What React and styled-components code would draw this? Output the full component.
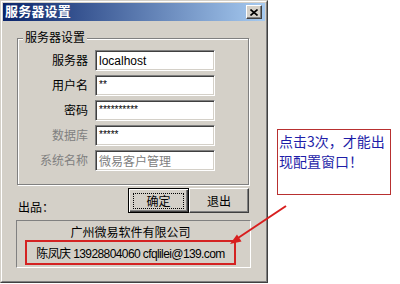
import styled, { createGlobalStyle } from "styled-components";

const GlobalStyle = createGlobalStyle`
  html, body {
    margin: 0;
    padding: 0;
    background: #ffffff;
  }
  body {
    font-family: "Liberation Sans", "Noto Sans CJK SC", sans-serif;
    font-size: 12px;
    color: #000000;
  }
`;

const Page = styled.div`
  position: relative;
  display: flex;
  width: 400px;
  height: 284px;
  overflow: hidden;
`;

const Window = styled.div`
  width: 268px;
  height: 283px;
  box-sizing: border-box;
  border: 1px solid;
  border-color: #d4d0c8 #404040 #404040 #d4d0c8;
  background: #d4d0c8;
  flex-shrink: 0;
`;

const Frame = styled.div`
  height: 100%;
  box-sizing: border-box;
  border: 1px solid;
  border-color: #ffffff #808080 #808080 #ffffff;
  padding: 1px;
  display: flex;
  flex-direction: column;
`;

const TitleBar = styled.div`
  height: 18px;
  display: flex;
  align-items: center;
  justify-content: space-between;
  padding: 0 3px 0 2px;
  background: linear-gradient(to right, #0a246a, #a6caf0);
`;

const Title = styled.span`
  color: #ffffff;
  font-weight: bold;
  font-size: 13px;
  line-height: 18px;
  letter-spacing: 0.2px;
`;

const CloseButton = styled.div`
  width: 16px;
  height: 14px;
  box-sizing: border-box;
  display: flex;
  align-items: center;
  justify-content: center;
  background: #d4d0c8;
  border: 1px solid;
  border-color: #ffffff #404040 #404040 #ffffff;
  box-shadow: inset -1px -1px 0 #808080;
`;

const Client = styled.div`
  display: flex;
  flex-direction: column;
  padding: 17px 15px 0 14px;
`;

const GroupBox = styled.div`
  position: relative;
  width: 232px;
  box-sizing: border-box;
  border: 1px solid #808080;
  box-shadow: 1px 1px 0 #ffffff, inset 1px 1px 0 #ffffff;
  padding: 11px 0 13px;
  display: grid;
  grid-template-columns: 70px 120px;
  grid-auto-rows: 21px;
  column-gap: 7px;
  row-gap: 4px;
  align-items: center;
`;

const Legend = styled.span`
  position: absolute;
  top: -8px;
  left: 5px;
  padding: 0 2px;
  background: #d4d0c8;
  line-height: 14px;
  font-size: 12px;
`;

const Label = styled.div`
  text-align: right;
  line-height: 14px;
  color: ${(p) => (p.$disabled ? "#808080" : "#000000")};
`;

const Field = styled.div`
  height: 21px;
  box-sizing: border-box;
  border: 1px solid;
  border-color: #808080 #ffffff #ffffff #808080;
  box-shadow: inset 1px 1px 0 #404040, inset -1px -1px 0 #d4d0c8;
  background: #ffffff;
  padding: 0 3px;
  display: flex;
  align-items: ${(p) => (p.$mask ? "flex-start" : "center")};
  padding-top: ${(p) => (p.$mask ? "3px" : "0")};
  font-size: ${(p) => (p.$mask ? "10px" : "12px")};
  color: ${(p) => (p.$disabled ? "#808080" : "#000000")};
  white-space: nowrap;
  overflow: hidden;
`;

const ActionRow = styled.div`
  width: 232px;
  margin-top: 3px;
  display: flex;
  justify-content: space-between;
  align-items: flex-end;
`;

const Producer = styled.span`
  line-height: 14px;
  margin-bottom: -2px;
  margin-left: 1px;
`;

const Buttons = styled.div`
  display: flex;
`;

const Button = styled.div`
  width: ${(p) => (p.$default ? "61px" : "60px")};
  height: 25px;
  box-sizing: border-box;
  display: flex;
  align-items: center;
  justify-content: center;
  background: #d4d0c8;
  border: 1px solid;
  border-color: ${(p) =>
    p.$default ? "#000000" : "#ffffff #404040 #404040 #ffffff"};
  box-shadow: ${(p) =>
    p.$default
      ? "inset 1px 1px 0 #ffffff, inset -1px -1px 0 #404040, inset -2px -2px 0 #808080"
      : "inset -1px -1px 0 #808080"};
  font-size: 12px;
`;

const FocusRing = styled.span`
  display: flex;
  align-items: center;
  justify-content: center;
  width: 51px;
  height: 16px;
  box-sizing: border-box;
  border: 1px dotted #000000;
`;

const CreditBox = styled.div`
  width: 235px;
  height: 48px;
  margin: 7px 0 0 -1px;
  box-sizing: border-box;
  border: 1px solid;
  border-color: #808080 #ffffff #ffffff #808080;
  display: flex;
  flex-direction: column;
  align-items: flex-start;
`;

const Company = styled.div`
  align-self: stretch;
  text-align: center;
  padding-top: 6px;
  line-height: 13px;
  margin-left: -6px;
`;

const Highlight = styled.div`
  width: 211px;
  height: 25px;
  margin-left: 8px;
  box-sizing: border-box;
  border: 2px solid #d42222;
  display: flex;
  align-items: center;
  justify-content: center;
  white-space: nowrap;
  font-size: 12px;
  letter-spacing: -0.6px;
`;

const Side = styled.div`
  padding: 129px 0 0 9px;
`;

const Note = styled.div`
  width: 114px;
  height: 66px;
  box-sizing: border-box;
  border: 1px solid #b83030;
  background: #ffffff;
  padding: 1px 0 0 1px;
  color: #1e1ea8;
  font-family: "Noto Sans CJK SC", "Liberation Sans", sans-serif;
`;

const NoteLine = styled.div`
  font-size: 14px;
  line-height: 20px;
  height: 20px;
  white-space: nowrap;
`;

const Arrow = styled.svg`
  position: absolute;
  left: 0;
  top: 0;
  pointer-events: none;
`;

const fields = [
  { label: "服务器", value: "localhost" },
  { label: "用户名", value: "**", mask: true },
  { label: "密码", value: "**********", mask: true },
  { label: "数据库", value: "*****", mask: true, dim: true },
  { label: "系统名称", value: "微易客户管理", dim: true, grey: true },
];

export default function App() {
  return (
    <>
      <GlobalStyle />
      <Page>
        <Window>
          <Frame>
            <TitleBar>
              <Title>服务器设置</Title>
              <CloseButton>
                <svg width="8" height="7" viewBox="0 0 8 7">
                  <path
                    d="M0.5 0.5 L7.5 6.5 M7.5 0.5 L0.5 6.5"
                    stroke="#000"
                    strokeWidth="1.6"
                  />
                </svg>
              </CloseButton>
            </TitleBar>
            <Client>
              <GroupBox>
                <Legend>服务器设置</Legend>
                {fields.map((f) => [
                  <Label key={f.label + "l"} $disabled={f.dim}>
                    {f.label}
                  </Label>,
                  <Field key={f.label + "f"} $mask={f.mask} $disabled={f.grey}>
                    {f.value}
                  </Field>,
                ])}
              </GroupBox>
              <ActionRow>
                <Producer>出品：</Producer>
                <Buttons>
                  <Button $default>
                    <FocusRing>确定</FocusRing>
                  </Button>
                  <Button>退出</Button>
                </Buttons>
              </ActionRow>
              <CreditBox>
                <Company>广州微易软件有限公司</Company>
                <Highlight>陈凤庆 13928804060 cfqlilei@139.com</Highlight>
              </CreditBox>
            </Client>
          </Frame>
        </Window>
        <Side>
          <Note>
            <NoteLine>点击3次，才能出</NoteLine>
            <NoteLine>现配置窗口！</NoteLine>
          </Note>
        </Side>
        <Arrow width="400" height="284" viewBox="0 0 400 284">
          <line x1="286" y1="206" x2="238" y2="238" stroke="#d81e1e" strokeWidth="2" />
          <polygon points="230,244 241.5,241.5 237,234.5" fill="#d81e1e" />
        </Arrow>
      </Page>
    </>
  );
}
